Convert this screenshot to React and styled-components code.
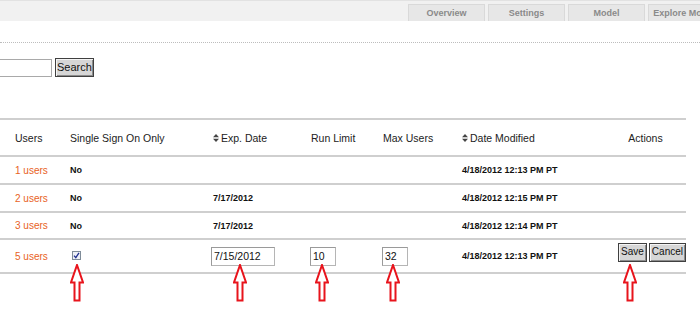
import React from "react";
import styled, { createGlobalStyle } from "styled-components";

const Global = createGlobalStyle`
  html, body { margin: 0; padding: 0; background: #fff; }
  body { font-family: "Liberation Sans", Arial, sans-serif; }
`;

const Page = styled.div`
  position: relative;
  width: 700px;
  height: 320px;
  overflow: hidden;
  background: #fff;
`;

const TopBar = styled.div`
  height: 21px;
  background: #f1f1f1;
  border-top: 1px solid #e2e2e2;
  box-sizing: border-box;
  display: flex;
  align-items: flex-end;
  gap: 3px;
  padding-left: 408px;
`;

const Tab = styled.div`
  flex: 0 0 77px;
  height: 17px;
  box-sizing: border-box;
  background: #e7e7e7;
  border: 1px solid #d9d9d9;
  border-bottom: none;
  display: flex;
  align-items: center;
  justify-content: center;
  font: bold 9px "Liberation Sans", Arial, sans-serif;
  color: #8a8a8a;
  white-space: nowrap;
`;

const Divider = styled.div`
  margin-top: 21px;
  border-top: 1px dotted #bdbdbd;
`;

const SearchRow = styled.div`
  display: flex;
  align-items: center;
  gap: 3px;
  margin-top: 15px;
`;

const SearchInput = styled.div`
  width: 52px;
  height: 18px;
  box-sizing: border-box;
  border: 1px solid #a9a9a9;
  border-left: none;
  background: #fff;
`;

const Button = styled.button`
  height: ${(p) => p.$h || 19}px;
  box-sizing: border-box;
  padding: 0 ${(p) => p.$px || 1}px;
  margin: 0;
  background: #d6d6d6;
  border: 1px solid #404040;
  box-shadow: inset 1px 1px 0 #f4f4f4, inset -1px -1px 0 #8c8c8c;
  font: ${(p) => p.$fs || 11}px "Liberation Sans", Arial, sans-serif;
  color: #111;
  line-height: 1;
`;

const Table = styled.table`
  margin-top: 41px;
  width: 686px;
  border-collapse: collapse;
  table-layout: fixed;
  border-top: 2px solid #cfcfcf;
`;

const Row = styled.tr`
  height: ${(p) => p.$h}px;
  border-bottom: 2px solid #cfcfcf;
`;

const Th = styled.th`
  padding: 0 0 0 ${(p) => (p.$center ? 0 : 15)}px;
  text-align: ${(p) => (p.$center ? "center" : "left")};
  font: 10.5px "Liberation Sans", Arial, sans-serif;
  color: #222;
  white-space: nowrap;
  vertical-align: middle;
`;

const Td = styled.td`
  padding: 0 0 0 ${(p) => (p.$pl !== undefined ? p.$pl : 15)}px;
  font: bold 9px "Liberation Sans", Arial, sans-serif;
  color: #111;
  white-space: nowrap;
  vertical-align: middle;
`;

const UsersLink = styled.span`
  font: 10px "Liberation Sans", Arial, sans-serif;
  color: #e8621e;
`;

const SortIcon = styled.svg`
  width: 6px;
  height: 8px;
  margin-right: 2px;
  vertical-align: -0.5px;
`;

const CheckBox = styled.span`
  display: inline-block;
  width: 9px;
  height: 9px;
  box-sizing: border-box;
  border: 1px solid #7f8c99;
  background: #eef0f6;
  margin-left: 2px;
  position: relative;
  svg { position: absolute; left: 0; top: 0; }
`;

const Field = styled.div`
  width: ${(p) => p.$w}px;
  height: 19px;
  box-sizing: border-box;
  border: 1px solid #b5b5b5;
  border-top-color: #9a9a9a;
  border-left-color: #9a9a9a;
  display: flex;
  align-items: center;
  padding-left: 2px;
  font: 10.5px "Liberation Sans", Arial, sans-serif;
  color: #111;
  background: #fff;
`;

const Actions = styled.div`
  display: flex;
  gap: 2px;
  justify-content: flex-end;
  margin-top: -8px;
`;

const Arrow = styled.svg`
  position: absolute;
  top: 264px;
  width: 14px;
  height: 38px;
`;

const Sort = () => (
  <SortIcon viewBox="0 0 6 8">
    <path d="M3 0 L6 3.3 L0 3.3 Z M3 8 L6 4.7 L0 4.7 Z" fill="#444" />
  </SortIcon>
);

const UpArrow = ({ x }) => (
  <Arrow viewBox="0 0 14 38" style={{ left: x - 7 }}>
    <path
      d="M7 1 L13 18.5 L9.5 18.5 L9.5 36.5 L4.5 36.5 L4.5 18.5 L1 18.5 Z"
      fill="#fff"
      stroke="#e8141c"
      strokeWidth="2"
      strokeLinejoin="miter"
    />
  </Arrow>
);

const rows = [
  { users: "1 users", sso: "No", exp: "", mod: "4/18/2012 12:13 PM PT", h: 28 },
  { users: "2 users", sso: "No", exp: "7/17/2012", mod: "4/18/2012 12:15 PM PT", h: 28 },
  { users: "3 users", sso: "No", exp: "7/17/2012", mod: "4/18/2012 12:14 PM PT", h: 27 },
];

export default function App() {
  return (
    <Page>
      <Global />
      <TopBar>
        <Tab>Overview</Tab>
        <Tab>Settings</Tab>
        <Tab>Model</Tab>
        <Tab>Explore Models</Tab>
      </TopBar>
      <Divider />
      <SearchRow>
        <SearchInput />
        <Button $h={19} $px={1}>Search</Button>
      </SearchRow>
      <Table>
        <colgroup>
          <col style={{ width: 55 }} />
          <col style={{ width: 143 }} />
          <col style={{ width: 98 }} />
          <col style={{ width: 72 }} />
          <col style={{ width: 79 }} />
          <col style={{ width: 158 }} />
          <col />
        </colgroup>
        <thead>
          <Row $h={37}>
            <Th>Users</Th>
            <Th>Single Sign On Only</Th>
            <Th><Sort />Exp. Date</Th>
            <Th>Run Limit</Th>
            <Th>Max Users</Th>
            <Th><Sort />Date Modified</Th>
            <Th $center>Actions</Th>
          </Row>
        </thead>
        <tbody>
          {rows.map((r) => (
            <Row $h={r.h} key={r.users}>
              <Td><UsersLink>{r.users}</UsersLink></Td>
              <Td>{r.sso}</Td>
              <Td>{r.exp}</Td>
              <Td />
              <Td />
              <Td>{r.mod}</Td>
              <Td />
            </Row>
          ))}
          <Row $h={34}>
            <Td><UsersLink>5 users</UsersLink></Td>
            <Td>
              <CheckBox>
                <svg width="7" height="7" viewBox="0 0 7 7">
                  <path d="M1 3.6 L2.8 5.6 L6 0.8" fill="none" stroke="#1f2f8f" strokeWidth="1.3" />
                </svg>
              </CheckBox>
            </Td>
            <Td $pl={13}><Field $w={64}>7/15/2012</Field></Td>
            <Td $pl={14}><Field $w={26}>10</Field></Td>
            <Td $pl={14}><Field $w={26}>32</Field></Td>
            <Td>4/18/2012 12:13 PM PT</Td>
            <Td $pl={0}>
              <Actions>
                <Button $px={2} $fs={10}>Save</Button>
                <Button $px={2} $fs={10}>Cancel</Button>
              </Actions>
            </Td>
          </Row>
        </tbody>
      </Table>
      <UpArrow x={77} />
      <UpArrow x={240} />
      <UpArrow x={322} />
      <UpArrow x={393} />
      <UpArrow x={630} />
    </Page>
  );
}
